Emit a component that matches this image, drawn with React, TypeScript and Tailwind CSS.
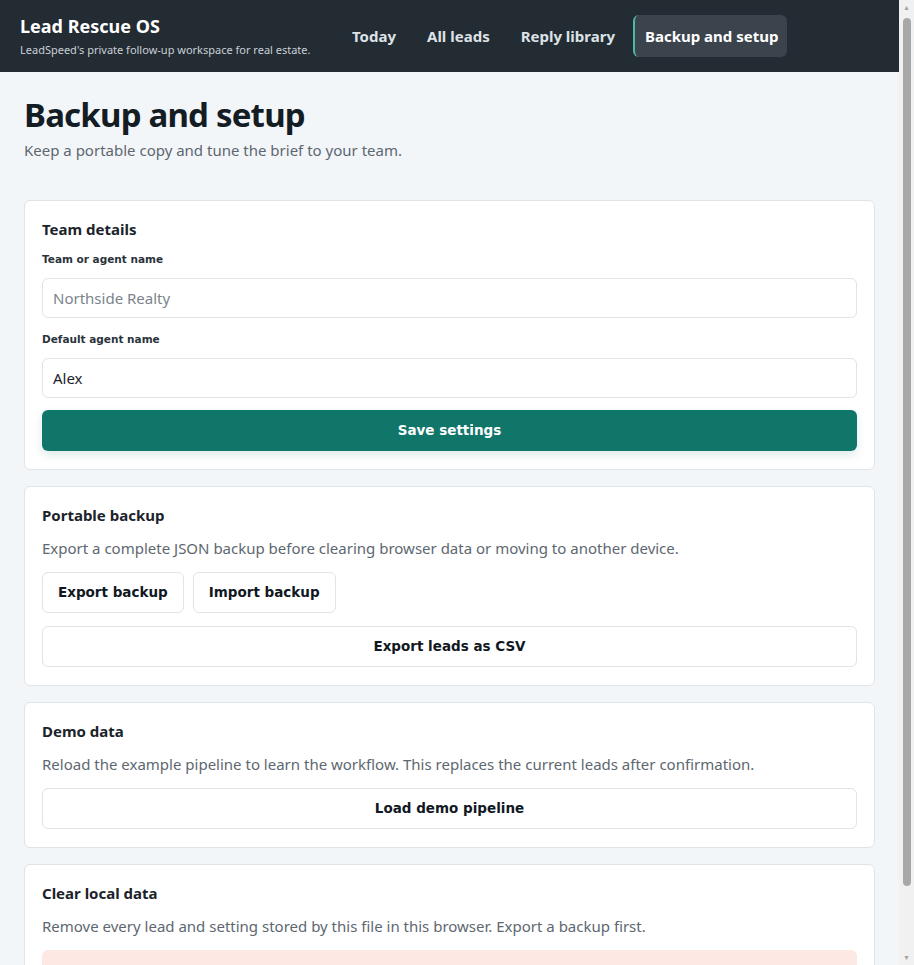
import React, { useState } from 'react';

const navItems = ['Today', 'All leads', 'Reply library', 'Backup and setup'];

const sans = 'font-["Segoe_UI","Noto_Sans",sans-serif]';
const btnFont = 'font-["DejaVu_Sans",Verdana,sans-serif]';

const Card: React.FC<{ title: string; children: React.ReactNode }> = ({ title, children }) => (
  <section className="bg-white border border-[#dfe4e8] rounded-md px-[17px] pt-[17px] pb-[18px]">
    <h3 className="text-[15px] font-bold text-[#1b232b] leading-[22px] mb-[11px]">{title}</h3>
    {children}
  </section>
);

const OutlineButton: React.FC<{ label: string; full?: boolean }> = ({ label, full }) => (
  <button
    className={`${btnFont} ${full ? 'w-full' : ''} h-[41px] px-[15px] bg-white border border-[#dfe4e8] rounded-md text-[13.5px] font-bold text-[#11181f]`}
  >
    {label}
  </button>
);

const App: React.FC = () => {
  const [team, setTeam] = useState('');
  const [agent, setAgent] = useState('Alex');
  const active = 'Backup and setup';

  return (
    <div className={`${sans} flex min-h-screen bg-[#f3f6f9] text-[#1b232b]`}>
      <div className="flex-1 min-w-0">
        <header className="h-[72px] bg-[#232b33] flex items-center px-[20px]">
          <div className="w-[321px]">
            <h1 className="text-[18px] font-bold text-white leading-[24px] -mt-[1px]">Lead Rescue OS</h1>
            <p className="text-[11px] text-[#c9d0d6] leading-[15px] mt-[4px]">
              LeadSpeed's private follow-up workspace for real estate.
            </p>
          </div>
          <nav className="flex items-center gap-[9px]">
            {navItems.map((item) => (
              <a
                key={item}
                className={`h-[42px] flex items-center px-[11px] rounded-md text-[15px] font-bold ${
                  item === active
                    ? 'bg-[#3b434c] text-white border-l-2 border-[#4fb8a0] pl-[10px] pr-[9px] -ml-[2px]'
                    : 'text-[#dde2e7]'
                }`}
              >
                {item}
              </a>
            ))}
          </nav>
        </header>

        <main className="px-[24px] pt-[22px] pb-[40px]">
          <h2 className="text-[33px] font-bold leading-[42px] tracking-[-0.8px] text-[#141c24]">Backup and setup</h2>
          <p className="text-[15px] leading-[22px] text-[#5d6770] mt-[3px]">
            Keep a portable copy and tune the brief to your team.
          </p>

          <div className="mt-[39px] flex flex-col gap-[16px]">
            <Card title="Team details">
              <label className={`${btnFont} block text-[10.5px] leading-[16px] font-bold text-[#2a333b] mb-[11px]`}>
                Team or agent name
              </label>
              <input
                value={team}
                onChange={(e) => setTeam(e.target.value)}
                placeholder="Northside Realty"
                className="w-full h-[40px] px-[10px] border border-[#dfe4e8] rounded-md text-[15px] placeholder:text-[#7b848c] outline-none"
              />
              <label className={`${btnFont} block text-[10.5px] leading-[16px] font-bold text-[#2a333b] mt-[13px] mb-[11px]`}>
                Default agent name
              </label>
              <input
                value={agent}
                onChange={(e) => setAgent(e.target.value)}
                className="w-full h-[40px] px-[10px] border border-[#dfe4e8] rounded-md text-[15px] text-[#1b232b] outline-none"
              />
              <button
                className={`${btnFont} mt-[12px] w-full h-[41px] bg-[#11766a] text-white rounded-md text-[13.5px] font-bold shadow-[0_4px_10px_rgba(17,118,106,0.15)]`}
              >
                Save settings
              </button>
            </Card>

            <Card title="Portable backup">
              <p className="text-[15px] text-[#5d6770] leading-[22px] mb-[13px]">
                Export a complete JSON backup before clearing browser data or moving to another device.
              </p>
              <div className="flex gap-[9px] mb-[13px]">
                <OutlineButton label="Export backup" />
                <OutlineButton label="Import backup" />
              </div>
              <OutlineButton label="Export leads as CSV" full />
            </Card>

            <Card title="Demo data">
              <p className="text-[15px] text-[#5d6770] leading-[22px] mb-[13px]">
                Reload the example pipeline to learn the workflow. This replaces the current leads after confirmation.
              </p>
              <OutlineButton label="Load demo pipeline" full />
            </Card>

            <Card title="Clear local data">
              <p className="text-[15px] text-[#5d6770] leading-[22px] mb-[13px]">
                Remove every lead and setting stored by this file in this browser. Export a backup first.
              </p>
              <button
                className={`${btnFont} w-full h-[44px] bg-[#fde8e3] text-[#a02a1a] rounded-md text-[13.5px] font-bold`}
              >
                Clear all local data
              </button>
            </Card>
          </div>
        </main>
      </div>

      {/* scrollbar strip as seen in the screenshot */}
      <aside className="w-[15px] h-screen sticky top-0 bg-[#f1f1f1] flex flex-col items-center">
        <div className="h-[15px] flex items-center justify-center text-[7px] leading-none text-[#a3a3a3]">▲</div>
        <div className="w-[8px] h-[868px] mt-[3px] rounded-full bg-[#a8a8a8]" />
        <div className="flex-1" />
        <div className="h-[15px] flex items-center justify-center text-[7px] leading-none text-[#a3a3a3]">▼</div>
      </aside>
    </div>
  );
};

export default App;
